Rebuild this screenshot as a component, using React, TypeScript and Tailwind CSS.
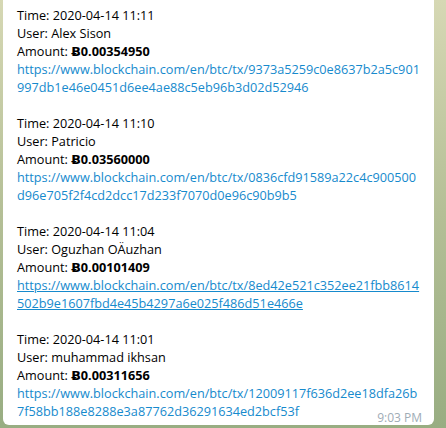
import React from 'react';

interface Tx {
  time: string;
  user: string;
  amount: string;
  link: [string, string];
  hovered?: boolean;
}

const txs: Tx[] = [
  {
    time: '2020-04-14 11:11',
    user: 'Alex Sison',
    amount: '0.00354950',
    link: ['https://www.blockchain.com/en/btc/tx/9373a5259c0e8637b2a5c901', '997db1e46e0451d6ee4ae88c5eb96b3d02d52946'],
  },
  {
    time: '2020-04-14 11:10',
    user: 'Patricio',
    amount: '0.03560000',
    link: ['https://www.blockchain.com/en/btc/tx/0836cfd91589a22c4c900500', 'd96e705f2f4cd2dcc17d233f7070d0e96c90b9b5'],
  },
  {
    time: '2020-04-14 11:04',
    user: 'Oguzhan OÄuzhan',
    amount: '0.00101409',
    link: ['https://www.blockchain.com/en/btc/tx/8ed42e521c352ee21fbb8614', '502b9e1607fbd4e45b4297a6e025f486d51e466e'],
    hovered: true,
  },
  {
    time: '2020-04-14 11:01',
    user: 'muhammad ikhsan',
    amount: '0.00311656',
    link: ['https://www.blockchain.com/en/btc/tx/12009117f636d2ee18dfa26b', '7f58bb188e8288e3a87762d36291634ed2bcf53f'],
  },
];

function TxBlock({ tx }: { tx: Tx }) {
  const href = tx.link.join('');
  return (
    <div>
      <div>Time: {tx.time}</div>
      <div>User: {tx.user}</div>
      <div>
        Amount: <span className="font-bold">Ƀ{tx.amount}</span>
      </div>
      <a href={href} className={tx.hovered ? 'text-[#168acd] underline' : 'text-[#168acd]'}>
        <span className="block">{tx.link[0]}</span>
        <span className="block">{tx.link[1]}</span>
      </a>
    </div>
  );
}

export default function App() {
  return (
    <div className="flex h-[428px] w-[446px] flex-col justify-end overflow-hidden bg-gradient-to-b from-[#d6d8b4] via-[#b4bf96] to-[#98ad82] pb-[3px] pl-[3px]">
      <div
        className="relative w-[431px] rounded-b-[6px] bg-white px-[14px] pb-[5px] pt-[6px] text-[12.7px] leading-[18px] text-black"
        style={{ fontFamily: '"Open Sans", "DejaVu Sans", sans-serif' }}
      >
        <div className="flex flex-col gap-[18px]">
          {txs.map(tx => (
            <TxBlock key={tx.time} tx={tx} />
          ))}
        </div>
        <span className="absolute bottom-[1px] right-[12px] text-[12px] leading-none text-[#a0acb6]">9:03 PM</span>
      </div>
    </div>
  );
}
